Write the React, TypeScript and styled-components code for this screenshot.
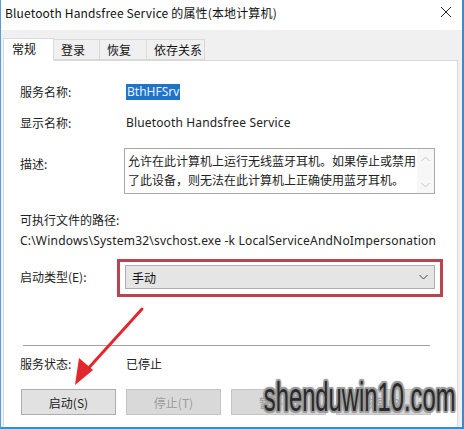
import React from "react";
import styled, { createGlobalStyle } from "styled-components";

const GlobalStyle = createGlobalStyle`
  html, body { margin: 0; padding: 0; background: #ffffff; }
  body { overflow: hidden; }
`;

const FONT = `"Segoe UI", "Noto Sans", "Noto Sans CJK SC", sans-serif`;
const CJK = `"Noto Sans CJK SC", "Noto Sans", sans-serif`;

const Window = styled.div`
  position: relative;
  width: 464px;
  height: 429px;
  box-sizing: border-box;
  border-left: 1px solid #5b9bd5;
  border-right: 2px solid #3a8ad0;
  border-bottom: 2px solid #3a8ad0;
  background: #f0f0f0;
  display: flex;
  flex-direction: column;
  font-family: ${FONT};
  font-size: 12px;
  color: #1a1a1a;
  overflow: hidden;
`;

const TitleBar = styled.div`
  height: 30px;
  background: #ffffff;
  display: flex;
  align-items: center;
  justify-content: space-between;
  padding: 0 10px 0 4px;
  flex-shrink: 0;
`;

const TitleText = styled.span`
  font-family: ${CJK};
  font-size: 12px;
  color: #111;
  margin-top: -6px;
  letter-spacing: 0.15px;
`;

const CloseIcon = styled.svg`
  width: 12px;
  height: 12px;
  margin-top: -6px;
`;

const Body = styled.div`
  flex: 1;
  display: flex;
  flex-direction: column;
  padding: 7px 2px 0 2px;
`;

const TabStrip = styled.div`
  display: flex;
  align-items: flex-end;
  height: 23px;
  position: relative;
  z-index: 1;
`;

const Tab = styled.div<{ $active?: boolean; $w: number }>`
  width: ${(p) => p.$w}px;
  height: ${(p) => (p.$active ? 23 : 21)}px;
  box-sizing: border-box;
  border: 1px solid #d9d9d9;
  border-bottom: ${(p) => (p.$active ? "1px solid #ffffff" : "1px solid #d9d9d9")};
  margin-left: ${(p) => (p.$active ? 0 : -1)}px;
  margin-bottom: ${(p) => (p.$active ? -1 : 0)}px;
  background: ${(p) => (p.$active ? "#ffffff" : "#f0f0f0")};
  font-family: ${CJK};
  font-size: 12px;
  color: #111;
  display: flex;
  align-items: center;
  padding-left: ${(p) => (p.$active ? 8 : 7)}px;
  padding-bottom: ${(p) => (p.$active ? 2 : 0)}px;
`;

const Panel = styled.div`
  flex: 1;
  background: #ffffff;
  border: 1px solid #d9d9d9;
  border-bottom: none;
  margin-right: 2px;
  display: flex;
  flex-direction: column;
  padding: 23px 22px 0 16px;
  position: relative;
`;

const Row = styled.div<{ $mt?: number; $align?: string }>`
  display: grid;
  grid-template-columns: 106px 1fr;
  align-items: ${(p) => p.$align || "center"};
  margin-top: ${(p) => p.$mt || 0}px;
`;

const Label = styled.span<{ $pt?: number; $mt?: number }>`
  font-family: ${CJK};
  font-size: 12px;
  color: #222;
  line-height: 16px;
  padding-top: ${(p) => p.$pt || 0}px;
  margin-top: ${(p) => p.$mt || 0}px;
`;

const Value = styled.span`
  font-family: ${FONT};
  font-size: 12px;
  line-height: 16px;
  color: #222;
  letter-spacing: 0.15px;
`;

const Selected = styled.span`
  justify-self: start;
  background: #1f74c8;
  color: #e8f2ff;
  font-family: ${FONT};
  font-size: 12px;
  line-height: 16px;
  padding: 0 1px;
`;

const TextArea = styled.div`
  position: relative;
  height: 46px;
  border: 1px solid #a8a8a8;
  box-sizing: border-box;
  margin-left: -2px;
  padding: 2px 17px 0 3px;
  font-family: ${CJK};
  font-size: 12px;
  line-height: 19px;
  color: #222;
`;

const ScrollBar = styled.div`
  position: absolute;
  right: 0;
  top: 0;
  bottom: 0;
  width: 17px;
  background: #f7f7f7;
  display: flex;
  flex-direction: column;
  justify-content: space-between;
  align-items: center;
  padding: 7px 0 5px;
  box-sizing: border-box;
`;

const Chevron = styled.svg`
  width: 9px;
  height: 6px;
`;

const PathText = styled.div`
  font-family: ${FONT};
  font-size: 12px;
  line-height: 16px;
  color: #222;
  margin-top: 5px;
  white-space: nowrap;
  letter-spacing: 0.2px;
`;

const Annotation = styled.div`
  margin: -6px -8px -8px -9px;
  border: 3px solid #b8454d;
  padding: 3px 5px 5px 5px;
`;

const Select = styled.div`
  height: 24px;
  box-sizing: border-box;
  border: 1px solid #adadad;
  background: #e5e5e5;
  display: flex;
  align-items: center;
  justify-content: space-between;
  padding: 0 6px 0 6px;
  font-family: ${CJK};
  font-size: 12px;
  color: #111;
`;

const Separator = styled.div`
  height: 1px;
  background: #a0a0a0;
  margin: 56px 5px 0 3px;
`;

const ButtonRow = styled.div`
  display: flex;
  gap: 10px;
  margin-top: 17px;
  margin-left: 1px;
`;

const Button = styled.div<{ $disabled?: boolean }>`
  width: 95px;
  height: 26px;
  box-sizing: border-box;
  border: 1px solid ${(p) => (p.$disabled ? "#c4c4c4" : "#adadad")};
  background: ${(p) => (p.$disabled ? "#d9d9d9" : "#e1e1e1")};
  color: ${(p) => (p.$disabled ? "#9b9b9b" : "#222")};
  font-family: ${CJK};
  font-size: 12px;
  display: flex;
  align-items: center;
  justify-content: center;
`;

const Arrow = styled.svg`
  position: absolute;
  left: 0;
  top: 0;
  width: 464px;
  height: 429px;
  pointer-events: none;
`;

const Watermark = styled.div`
  position: absolute;
  right: 7px;
  bottom: 9px;
  font-family: "Liberation Sans Narrow", "Liberation Sans", sans-serif;
  font-size: 41px;
  line-height: 41px;
  color: #2a2a2a;
  transform: scaleX(0.58);
  transform-origin: right bottom;
  white-space: nowrap;
  text-shadow:
    -2px -2px 1px #9a9a9a, 2px -2px 1px #9a9a9a, -2px 2px 1px #9a9a9a, 2px 2px 1px #9a9a9a,
    0 -2px 1px #9a9a9a, 0 2px 1px #9a9a9a, -3px 0 1px #9a9a9a, 3px 0 1px #9a9a9a;
`;

export default function App() {
  return (
    <>
      <GlobalStyle />
      <Window>
        <TitleBar>
          <TitleText>Bluetooth Handsfree Service 的属性(本地计算机)</TitleText>
          <CloseIcon viewBox="0 0 12 12">
            <path d="M1 1 L11 11 M11 1 L1 11" stroke="#222" strokeWidth="1" />
          </CloseIcon>
        </TitleBar>
        <Body>
          <TabStrip>
            <Tab $active $w={51}>常规</Tab>
            <Tab $w={47}>登录</Tab>
            <Tab $w={48}>恢复</Tab>
            <Tab $w={59}>依存关系</Tab>
          </TabStrip>
          <Panel>
            <Row>
              <Label>服务名称:</Label>
              <Selected>BthHFSrv</Selected>
            </Row>
            <Row $mt={15}>
              <Label>显示名称:</Label>
              <Value>Bluetooth Handsfree Service</Value>
            </Row>
            <Row $mt={17} $align="start">
              <Label $pt={8}>描述:</Label>
              <TextArea>
                允许在此计算机上运行无线蓝牙耳机。如果停止或禁用了此设备，则无法在此计算机上正确使用蓝牙耳机。
                <ScrollBar>
                  <Chevron viewBox="0 0 9 6">
                    <path d="M0.5 5 L4.5 1 L8.5 5" stroke="#c2c2c2" fill="none" />
                  </Chevron>
                  <Chevron viewBox="0 0 9 6">
                    <path d="M0.5 1 L4.5 5 L8.5 1" stroke="#c2c2c2" fill="none" />
                  </Chevron>
                </ScrollBar>
              </TextArea>
            </Row>
            <Label $mt={18}>可执行文件的路径:</Label>
            <PathText>C:\Windows\System32\svchost.exe -k LocalServiceAndNoImpersonation</PathText>
            <Row $mt={16}>
              <Label>启动类型(E):</Label>
              <Annotation>
                <Select>
                  <span>手动</span>
                  <Chevron viewBox="0 0 9 6">
                    <path d="M0.5 1 L4.5 5 L8.5 1" stroke="#444" fill="none" />
                  </Chevron>
                </Select>
              </Annotation>
            </Row>
            <Separator />
            <Row $mt={10}>
              <Label>服务状态:</Label>
              <Label>已停止</Label>
            </Row>
            <ButtonRow>
              <Button>启动(S)</Button>
              <Button $disabled>停止(T)</Button>
              <Button $disabled>暂停(P)</Button>
              <Button $disabled>恢复(R)</Button>
            </ButtonRow>
          </Panel>
        </Body>
        <Arrow viewBox="0 0 464 429">
          <path d="M141 309 L84 372" stroke="#e0282d" strokeWidth="3" strokeLinecap="round" />
          <path d="M74 385 L78 358 L92 370 Z" fill="#e0282d" />
        </Arrow>
        <Watermark>shenduwin10.com</Watermark>
      </Window>
    </>
  );
}
